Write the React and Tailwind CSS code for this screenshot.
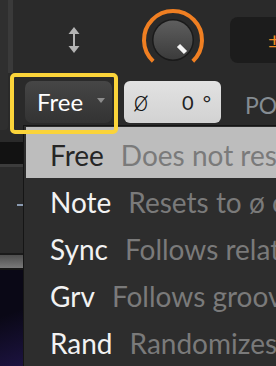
import React from 'react';

const MODES = [
  { label: 'Free', desc: 'Does not reset', active: true },
  { label: 'Note', desc: 'Resets to ø on each note' },
  { label: 'Sync', desc: 'Follows relative transport position' },
  { label: 'Grv', desc: 'Follows groove timing' },
  { label: 'Rand', desc: 'Randomizes phase on each note' },
];

const UpDownArrow = () => (
  <svg width="12" height="26" viewBox="0 0 12 26" className="shrink-0">
    <path d="M6 0 L11.5 7 L0.5 7 Z" fill="#b3b3b3" />
    <rect x="5" y="6" width="2" height="14" fill="#b3b3b3" />
    <path d="M0.5 19 L11.5 19 L6 26 Z" fill="#b3b3b3" />
  </svg>
);

const Knob = () => (
  <svg width="66" height="66" viewBox="0 0 66 66" className="shrink-0">
    <defs>
      <linearGradient id="knobBody" x1="0" y1="0" x2="0" y2="1">
        <stop offset="0" stopColor="#5e5e5e" />
        <stop offset="1" stopColor="#3b3b3b" />
      </linearGradient>
    </defs>
    {/* value arc, knob at max */}
    <path d="M13.2 54.2 A29 29 0 1 1 52.8 54.2" fill="none" stroke="#f07f22" strokeWidth="4" />
    <circle cx="33" cy="33" r="21" fill="#1a1a1a" />
    <circle cx="33" cy="33" r="19.5" fill="url(#knobBody)" />
    <line x1="38.5" y1="38.5" x2="45.5" y2="45.5" stroke="#f4f4f4" strokeWidth="4.5" />
  </svg>
);

const MenuRow = ({ label, desc, active, first }) => (
  <div
    className={`flex items-center gap-[17px] pl-[24px] whitespace-nowrap text-[28px] ${
      first ? 'h-[51px] pt-[4px]' : 'h-[47px]'
    } ${active ? 'bg-[#bdbdbd]' : ''}`}
  >
    <span className={active ? 'text-[#262626]' : 'text-[#f2f2f2]'}>{label}</span>
    <span className="text-[#7a7a7a]">{desc}</span>
  </div>
);

export default function App() {
  return (
    <div className="w-[276px] h-[366px] overflow-hidden bg-[#2a2a2a] flex flex-col font-['Lato',sans-serif]">
      {/* top panel */}
      <div className="h-[125px] flex shrink-0">
        <div className="w-[13px] flex flex-col shrink-0">
          <div className="h-[73px] flex">
            <div className="w-[8px] bg-[#2f2f2f]" />
            <div className="w-[5px] bg-[#3a3a3a]" />
          </div>
          <div className="flex-1 w-[8px] bg-[#2f2f2f]" />
        </div>

        <div className="flex-1 min-w-0 flex flex-col">
          <div className="h-[79px] flex items-center">
            <div className="ml-[55px]">
              <UpDownArrow />
            </div>
            <div className="ml-[60px]">
              <Knob />
            </div>
            <div className="ml-[24px] w-[60px] h-[46px] shrink-0 rounded-[8px] bg-[#1c1c1c] flex items-center pl-[38px] text-[22px] text-[#f08a24]">
              ±
            </div>
          </div>

          <div className="h-[46px] flex items-start pt-[2px]">
            <div className="relative ml-[12px] w-[87px] h-[42px] shrink-0 rounded-[7px] bg-gradient-to-b from-[#464646] to-[#333333] flex items-center pl-[12px]">
              <span className="text-[24px] text-white">Free</span>
              <svg width="8" height="5" viewBox="0 0 8 5" className="ml-auto mr-[7px] mb-[3px]">
                <path d="M0 0 L8 0 L4 5 Z" fill="#8c8c8c" />
              </svg>
              {/* focus highlight */}
              <div className="absolute -left-[15px] -top-[8px] -right-[6px] -bottom-[11px] z-10 rounded-[5px] border-4 border-[#fbd43a] pointer-events-none" />
            </div>

            <div className="ml-[12px] w-[97px] h-[42px] shrink-0 rounded-[6px] bg-gradient-to-b from-[#e2e2e2] to-[#d2d2d2] flex items-center pl-[9px] pr-[10px]">
              <span className="text-[26px] text-[#111] leading-none font-['DejaVu_Sans',sans-serif] font-extralight">ø</span>
              <span className="ml-auto text-[20px] text-[#222]">0</span>
              <span className="ml-[9px] text-[20px] text-[#222]">°</span>
            </div>

            <span className="ml-[24px] mt-[7px] text-[23px] text-[#858c92] whitespace-nowrap">POLY</span>
          </div>
        </div>
      </div>

      {/* lower area with open menu */}
      <div className="flex-1 flex min-h-0">
        <div className="w-[23px] shrink-0 flex flex-col">
          <div className="h-[5px]">
            <div className="w-[8px] h-full bg-[#2f2f2f] rounded-br-[4px]" />
          </div>
          <div className="h-[12px]" />
          <div className="h-[22px] bg-[#121212]" />
          <div className="h-[3px] bg-[#3c3c3c]" />
          <div className="h-[86px] bg-[#2b2b2b] pt-[37px] flex justify-end items-start">
            <div className="w-[6px] h-[2px] bg-[#8a9ab0]" />
          </div>
          <div className="h-[2px] bg-[#1a1a1a]" />
          <div className="h-[13px] bg-gradient-to-b from-[#4e4e4e] to-[#7a7a7a]" />
          <div className="h-[2px] bg-[#151515]" />
          <div className="flex-1 bg-[linear-gradient(160deg,#0a0816_45%,#1c1340)]" />
        </div>

        <div className="flex-1 min-w-0 border-l border-t border-[#151515] bg-[#2d2d2d] pl-[2px] pt-[1px] overflow-hidden">
          {MODES.map((m, i) => (
            <MenuRow key={m.label} {...m} first={i === 0} />
          ))}
        </div>
      </div>
    </div>
  );
}
